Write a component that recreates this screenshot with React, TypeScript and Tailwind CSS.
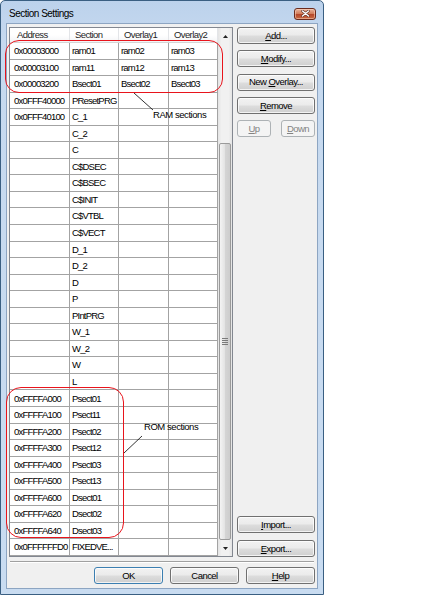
import React from "react";

type Row = [string, string, string?, string?];

const rows: Row[] = [
  ["0x00003000", "ram01", "ram02", "ram03"],
  ["0x00003100", "ram11", "ram12", "ram13"],
  ["0x00003200", "Bsect01", "Bsect02", "Bsect03"],
  ["0x0FFF40000", "PResetPRG"],
  ["0x0FFF40100", "C_1"],
  ["", "C_2"],
  ["", "C"],
  ["", "C$DSEC"],
  ["", "C$BSEC"],
  ["", "C$INIT"],
  ["", "C$VTBL"],
  ["", "C$VECT"],
  ["", "D_1"],
  ["", "D_2"],
  ["", "D"],
  ["", "P"],
  ["", "PIntPRG"],
  ["", "W_1"],
  ["", "W_2"],
  ["", "W"],
  ["", "L"],
  ["0xFFFFA000", "Psect01"],
  ["0xFFFFA100", "Psect11"],
  ["0xFFFFA200", "Psect02"],
  ["0xFFFFA300", "Psect12"],
  ["0xFFFFA400", "Psect03"],
  ["0xFFFFA500", "Psect13"],
  ["0xFFFFA600", "Dsect01"],
  ["0xFFFFA620", "Dsect02"],
  ["0xFFFFA640", "Dsect03"],
  ["0x0FFFFFFD0", "FIXEDVE..."],
];

const btn =
  "h-[17px] rounded-[3px] border flex items-center justify-center text-[9.5px] tracking-[-0.55px] leading-none";
const btnOn =
  "border-[#707070] text-black bg-[linear-gradient(#f2f2f2_0%,#ebebeb_48%,#dddddd_52%,#cfcfcf_100%)] shadow-[inset_0_0_0_1px_rgba(255,255,255,0.75)]";
const btnOff = "border-[#adb2b5] text-[#838383] bg-[#f4f4f4]";

function Btn({ label, u, className = "", disabled = false }: { label: string; u?: number; className?: string; disabled?: boolean }) {
  const i = u ?? -1;
  return (
    <div className={`${btn} ${disabled ? btnOff : btnOn} ${className}`}>
      {i >= 0 ? (
        <span>
          {label.slice(0, i)}
          <span className="underline underline-offset-[1px]">{label[i]}</span>
          {label.slice(i + 1)}
        </span>
      ) : (
        <span>{label}</span>
      )}
    </div>
  );
}

function Scrollbar() {
  return (
    <div className="w-[14px] flex flex-col bg-[linear-gradient(to_right,#e4e4e4,#f1f1f1_25%,#f1f1f1_75%,#e4e4e4)]">
      <div className="h-[16px] flex items-center justify-center">
        <svg width="5" height="3" viewBox="0 0 5 3">
          <path d="M2.5 0 L5 3 L0 3 Z" fill="#222" />
        </svg>
      </div>
      <div className="h-[99px]" />
      <div className="flex-1 mx-[1px] rounded-[2px] border border-[#9a9a9a] bg-[linear-gradient(to_right,#f4f4f4,#e4e4e4_45%,#d4d4d4_55%,#cdcdcd)] flex items-center justify-center">
        <div className="flex flex-col gap-[1px]">
          <div className="w-[6px] h-[1px] bg-[#7a7a7a]" />
          <div className="w-[6px] h-[1px] bg-[#7a7a7a]" />
          <div className="w-[6px] h-[1px] bg-[#7a7a7a]" />
          <div className="w-[6px] h-[1px] bg-[#7a7a7a]" />
        </div>
      </div>
      <div className="h-[16px] flex items-center justify-center">
        <svg width="5" height="3" viewBox="0 0 5 3">
          <path d="M0 0 L5 0 L2.5 3 Z" fill="#222" />
        </svg>
      </div>
    </div>
  );
}

function Table() {
  const cols = ["w-[60px]", "w-[49px]", "w-[50px]", "w-[49px]"];
  const heads = ["Address", "Section", "Overlay1", "Overlay2"];
  return (
    <div className="w-[224px] h-[530px] border border-[#828790] bg-white flex text-[9.5px] tracking-[-0.8px] leading-none">
      <div className="w-[208px] flex flex-col">
        <div className="h-[15px] flex border-b border-[#d5d5d5] bg-[linear-gradient(#ffffff,#ffffff_50%,#f3f4f6)] tracking-[-0.6px]">
          {heads.map((h, i) => (
            <div
              key={h}
              className={`${cols[i]} border-r border-[#e3e5e8] flex items-center ${i === 0 ? "pl-[7px]" : "pl-[5px]"} text-[#1f1f1f]`}
            >
              {h}
            </div>
          ))}
        </div>
        {rows.map((r, ri) => (
          <div key={ri} className="h-[16.55px] flex">
            {cols.map((c, ci) => (
              <div
                key={ci}
                className={`${c} border-r border-b border-[#a3a3a3] flex items-center ${ci === 0 ? "pl-[4px]" : "pl-[2px]"} text-black whitespace-nowrap overflow-hidden`}
              >
                {r[ci] ?? ""}
              </div>
            ))}
          </div>
        ))}
      </div>
      <Scrollbar />
    </div>
  );
}

export default function App() {
  return (
    <div
      className="relative w-[434px] h-[596px] bg-white overflow-hidden"
      style={{ fontFamily: '"Liberation Sans", Arial, sans-serif' }}
    >
      <div className="w-[324px] h-[595px] border border-[#3a5f82] rounded-t-[5px] bg-[linear-gradient(#bcd2ec,#c6d9ef_40px,#c9dcf1)] flex flex-col">
        <div className="h-[22px] flex items-center justify-between pl-[8px] pr-[7px]">
          <span className="text-[10px] tracking-[-0.5px] text-black pt-[2px]">Section Settings</span>
          <div className="w-[22px] h-[12px] mt-[3px] rounded-[3px] border border-[#6b2b1d] bg-[linear-gradient(#e8b39c,#d3805f_45%,#b6492b_55%,#c86a43)] flex items-center justify-center shadow-[inset_0_0_0_1px_rgba(255,220,200,0.5)]">
            <svg width="9" height="7" viewBox="0 0 9 7">
              <path d="M1.5 1 L7.5 6 M7.5 1 L1.5 6" stroke="#5a2a20" strokeWidth="2.6" strokeLinecap="round" />
              <path d="M1.5 1 L7.5 6 M7.5 1 L1.5 6" stroke="#ffffff" strokeWidth="1.5" strokeLinecap="round" />
            </svg>
          </div>
        </div>
        <div className="flex-1 mx-[5px] mb-[5px] border border-[#8da5c2] bg-[#f0f0f0] flex flex-col px-[2px] pt-[3px] pb-[4px]">
          <div className="flex gap-[4px]">
            <Table />
            <div className="flex-1 flex flex-col justify-between">
              <div className="flex flex-col gap-[6.25px]">
                <Btn label="Add..." u={0} />
                <Btn label="Modify..." u={0} />
                <Btn label="New Overlay..." u={4} />
                <Btn label="Remove" u={0} />
                <div className="flex justify-between">
                  <Btn label="Up" u={0} disabled className="w-[34px]" />
                  <Btn label="Down" u={0} disabled className="w-[34px]" />
                </div>
              </div>
              <div className="flex flex-col gap-[7px]">
                <Btn label="Import..." u={0} />
                <Btn label="Export..." u={0} />
              </div>
            </div>
          </div>
          <div className="mt-[4px] mx-[1px] h-[2px] border-t border-[#a0a0a0] border-b border-b-white" />
          <div className="mt-[4px] flex justify-end gap-[7px]">
            <Btn label="OK" className="w-[69px] !border-[#3c7fb1] shadow-[inset_0_0_0_1px_#a5dcf5]" />
            <Btn label="Cancel" className="w-[69px]" />
            <Btn label="Help" u={0} className="w-[69px]" />
          </div>
        </div>
      </div>

      {/* annotations */}
      <div className="absolute left-[5px] top-[40px] w-[218px] h-[53px] rounded-[14px] border border-[#e8141c]" />
      <div className="absolute left-[6px] top-[387px] w-[118px] h-[151px] rounded-[15px] border border-[#e8141c]" />
      <svg className="absolute left-0 top-0" width="434" height="596">
        <line x1="134" y1="93" x2="153" y2="110" stroke="#000" strokeWidth="0.8" />
        <line x1="124" y1="453" x2="142" y2="436" stroke="#000" strokeWidth="0.8" />
      </svg>
      <div className="absolute left-[153px] top-[110px] text-[9.5px] tracking-[-0.45px] leading-none text-black">RAM sections</div>
      <div className="absolute left-[144px] top-[422px] text-[9.5px] tracking-[-0.45px] leading-none text-black">ROM sections</div>
    </div>
  );
}
